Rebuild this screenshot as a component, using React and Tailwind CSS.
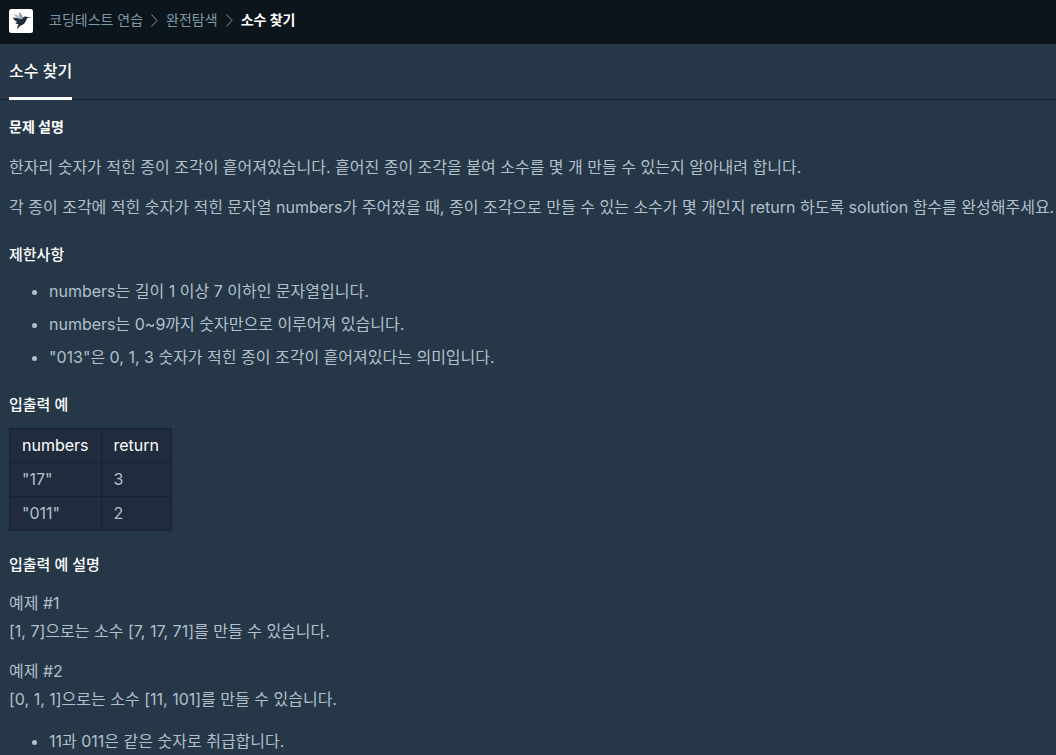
import React from "react";

const examples = [
  { numbers: '"17"', result: 3 },
  { numbers: '"011"', result: 2 },
];

const Logo = () => (
  <svg viewBox="0 0 24 24" className="w-6 h-6" aria-hidden="true">
    <rect width="24" height="24" rx="2.5" fill="#fff" />
    <path d="M5 4.800 9.500 6.500l3.800 3.700-3.300.3C7.500 9.500 5.600 7.500 5 4.800Z" fill="#b5bcc6" />
    <path d="M10 3.200c1.900.9 3.200 2.600 3.700 5l-.9 2C10.900 8.500 9.800 6.100 10 3.200Z" fill="#8d96a3" />
    <path
      d="M3.800 8.400c3.200.3 6.300.8 9.200 1.800.8-1.500 1.700-2.500 3-2.600 1-.1 1.700.2 2.500.5l4 .1-4.200.8c-.7.700-.8 1.600-1.300 2.700-.9 2.200-2.400 3.700-4.400 4.500-1.800.7-3 1.800-4.400 4.200 0-2 .4-3.700 1.400-5.100-1.300-.1-2.500-.6-3.400-1.400l2.300-.9C6.300 12 4.700 10.600 3.800 8.400Z"
      fill="#202b3d"
    />
  </svg>
);

const Separator = () => (
  <svg viewBox="0 0 7 14" className="w-[7px] h-3.5 mx-2" fill="none" stroke="#8298a6" aria-hidden="true">
    <path d="M.5 1.500 6 7.500l-5.500 6" />
  </svg>
);

const Heading = ({ children }) => (
  <h2 className="mt-[22px] text-[15px] leading-6 font-medium text-white">{children}</h2>
);

const App = () => {
  return (
    <div className="min-h-screen bg-[#263747] text-[#b2c0cc] text-base leading-7 font-['Inter','Noto_Sans_CJK_KR',sans-serif]">
      <header className="flex items-center h-11 px-[9px] bg-[#0c151c]">
        <a href="#home" aria-label="Home" className="pb-0.5">
          <Logo />
        </a>
        <nav aria-label="Breadcrumb" className="ml-4 pb-1 text-sm leading-6 text-[#7f98a8]">
          <ol className="flex items-center">
            <li>
              <a href="#challenges">코딩테스트 연습</a>
            </li>
            <li aria-hidden="true">
              <Separator />
            </li>
            <li>
              <a href="#search">완전탐색</a>
            </li>
            <li aria-hidden="true">
              <Separator />
            </li>
            <li className="font-bold text-white" aria-current="page">
              소수 찾기
            </li>
          </ol>
        </nav>
      </header>

      <div className="flex h-14 px-[9px] border-b border-[#172334]">
        <h1 className="-mb-px pt-[13px] border-b-3 border-white text-base leading-7 font-medium text-white">
          소수 찾기
        </h1>
      </div>

      <main className="pl-[9px] pt-[15px]">
        <h2 className="text-sm leading-6 font-bold text-white">문제 설명</h2>
        <p className="mt-3.5">
          한자리 숫자가 적힌 종이 조각이 흩어져있습니다. 흩어진 종이 조각을 붙여 소수를 몇 개 만들 수 있는지 알아내려 합니다.
        </p>
        <p className="mt-3">
          각 종이 조각에 적힌 숫자가 적힌 문자열 numbers가 주어졌을 때, 종이 조각으로 만들 수 있는 소수가 몇 개인지 return 하도록 solution 함수를 완성해주세요.
        </p>

        <Heading>제한사항</Heading>
        <ul className="mt-2.5 pl-10 list-disc space-y-[5px]">
          <li>numbers는 길이 1 이상 7 이하인 문자열입니다.</li>
          <li>numbers는 0~9까지 숫자만으로 이루어져 있습니다.</li>
          <li>"013"은 0, 1, 3 숫자가 적힌 종이 조각이 흩어져있다는 의미입니다.</li>
        </ul>

        <Heading>입출력 예</Heading>
        <table className="mt-[11px] border-collapse bg-[#202b3d] text-left leading-[33px]">
          <thead className="text-white">
            <tr>
              <th className="px-3 border border-[#172334] font-normal">numbers</th>
              <th className="px-3 border border-[#172334] font-normal">return</th>
            </tr>
          </thead>
          <tbody>
            {examples.map((e) => (
              <tr key={e.numbers}>
                <td className="px-3 border border-[#172334]">{e.numbers}</td>
                <td className="px-3 border border-[#172334]">{e.result}</td>
              </tr>
            ))}
          </tbody>
        </table>

        <Heading>입출력 예 설명</Heading>
        <p className="mt-3">
          예제 #1
          <br />
          [1, 7]으로는 소수 [7, 17, 71]를 만들 수 있습니다.
        </p>
        <p className="mt-3">
          예제 #2
          <br />
          [0, 1, 1]으로는 소수 [11, 101]를 만들 수 있습니다.
        </p>
        <ul className="mt-3.5 pl-10 list-disc">
          <li>11과 011은 같은 숫자로 취급합니다.</li>
        </ul>
      </main>
    </div>
  );
};

export default App;
